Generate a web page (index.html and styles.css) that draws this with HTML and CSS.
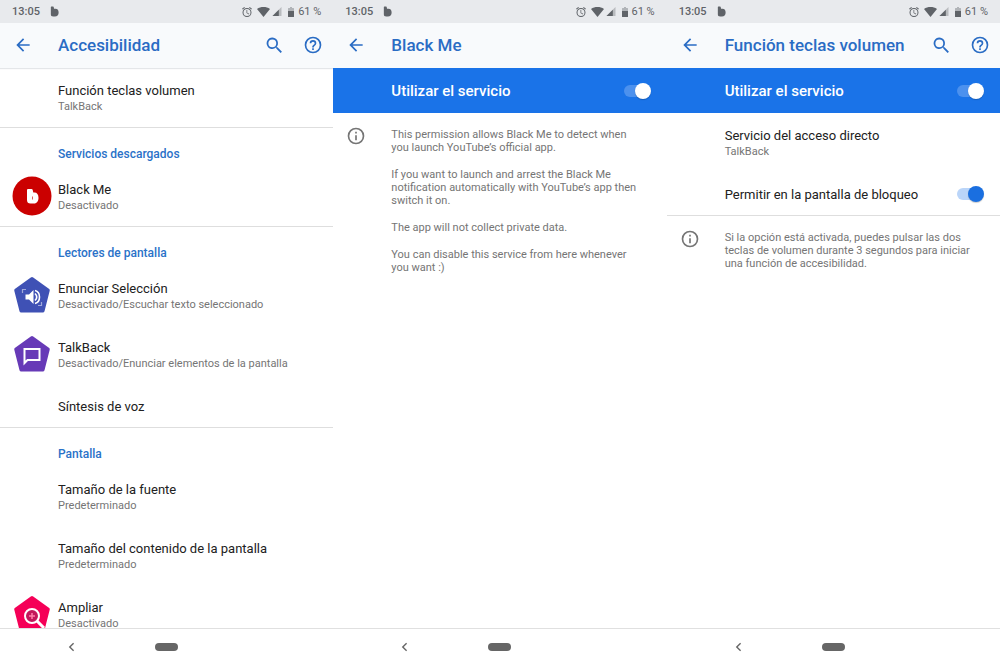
FILE: index.html
```html
<!DOCTYPE html>
<html lang="es">
<head>
  <meta charset="UTF-8">
  <meta name="viewport" content="width=device-width, initial-scale=1">
  <title>Accesibilidad</title>
  <link rel="stylesheet" href="styles.css">
</head>
<body>
  <!-- shared icons -->
  <svg class="sprite" aria-hidden="true">
    <symbol id="i-b" viewBox="0 0 24 24"><path d="M4 2q0-1 1-1h4q1 0 1.500 2l.5 3h3c5 0 7 3.500 7 8.500s-3 8.500-8 8.500H9c-3.500 0-5-2-5-5z"/></symbol>
    <symbol id="i-alarm" viewBox="0 0 24 24"><path d="M22 5.7l-4.6-3.9-1.3 1.5 4.6 3.9L22 5.7zM7.9 3.4L6.6 1.9 2 5.7l1.3 1.5 4.6-3.8zM12.500 8H11v6l4.700 2.900.8-1.200-4-2.400V8zM12 4a9 9 0 1 0 0 18 9 9 0 0 0 0-18zm0 16a7 7 0 1 1 0-14 7 7 0 0 1 0 14z"/></symbol>
    <symbol id="i-wifi" viewBox="0 0 26 20"><path d="M13 20L0 4C4 1 8 0 13 0s9 1 13 4z"/></symbol>
    <symbol id="i-signal" viewBox="0 0 20 20"><path opacity=".35" d="M0 20L20 0v20z"/><path d="M0 20L14 6v14z"/></symbol>
    <symbol id="i-battery" viewBox="0 0 12 20"><path opacity=".4" d="M4 0h4v2h3q1 0 1 1v5H0V3q0-1 1-1h3z"/><path d="M0 8h12v11q0 1-1 1H1q-1 0-1-1z"/></symbol>
    <symbol id="i-arrow" viewBox="0 0 24 24"><path d="M20 11H7.800l5.600-5.600L12 4l-8 8 8 8 1.400-1.400L7.800 13H20z"/></symbol>
    <symbol id="i-search" viewBox="0 0 24 24"><path d="M15.500 14h-.8l-.3-.3a6.500 6.500 0 1 0-.7.7l.3.3v.8l5 5 1.500-1.500-5-5zm-6 0a4.500 4.500 0 1 1 0-9 4.500 4.500 0 0 1 0 9z"/></symbol>
    <symbol id="i-help" viewBox="0 0 24 24"><path d="M11 18h2v-2h-2v2zm1-16a10 10 0 1 0 0 20 10 10 0 0 0 0-20zm0 18a8 8 0 1 1 0-16 8 8 0 0 1 0 16zm0-14a4 4 0 0 0-4 4h2a2 2 0 1 1 4 0c0 2-3 1.800-3 5h2c0-2.200 3-2.500 3-5a4 4 0 0 0-4-4z"/></symbol>
    <symbol id="i-info" viewBox="0 0 24 24"><path d="M11 7h2v2h-2zm0 4h2v6h-2zm1-9a10 10 0 1 0 0 20 10 10 0 0 0 0-20zm0 18a8 8 0 1 1 0-16 8 8 0 0 1 0 16z"/></symbol>
    <symbol id="i-back" viewBox="0 0 10 14"><path fill="none" stroke="currentColor" stroke-width="2" d="M8 1.500L2.500 7 8 12.500"/></symbol>
  </svg>

  <div class="screens">
    <section class="screen">
      <div class="status">
        <span class="time">13:05</span>
        <svg class="s-b"><use href="#i-b"/></svg>
        <svg class="s-alarm"><use href="#i-alarm"/></svg>
        <svg class="s-wifi"><use href="#i-wifi"/></svg>
        <svg class="s-signal"><use href="#i-signal"/></svg>
        <svg class="s-battery"><use href="#i-battery"/></svg>
        <span>61 %</span>
      </div>
      <header class="appbar appbar-line">
        <button class="icon-btn back" aria-label="Atrás"><svg><use href="#i-arrow"/></svg></button>
        <h1>Accesibilidad</h1>
        <button class="icon-btn" aria-label="Buscar"><svg class="search"><use href="#i-search"/></svg></button>
        <button class="icon-btn" aria-label="Ayuda"><svg><use href="#i-help"/></svg></button>
      </header>
      <main class="content">
        <div class="group">
          <div class="row">
            <div class="text"><div class="title">Función teclas volumen</div><div class="sub">TalkBack</div></div>
          </div>
        </div>
        <div class="group">
          <h2>Servicios descargados</h2>
          <div class="row">
            <svg class="app-icon" viewBox="0 0 40 40">
              <circle cx="20" cy="20" r="19.500" fill="#cb0000"/>
              <path d="M15 14q0-1 1-1h3.500q1 0 1.200 1l.6 2.500h1.200c2.500 0 4 2 4 5.200S25 27.500 22 27.500h-3.500c-2.300 0-3.500-1-3.500-3.500z" fill="#fff"/>
              <path d="M20 20.500h1v3h-1z" fill="#d96060"/>
            </svg>
            <div class="text"><div class="title">Black Me</div><div class="sub">Desactivado</div></div>
          </div>
        </div>
        <div class="group">
          <h2>Lectores de pantalla</h2>
          <div class="row">
            <svg class="app-icon" viewBox="0 0 40 40">
              <path d="M18.800 2.500q1.200-.8 2.400 0l16 11.500q.8.700.5 1.800l-5.200 20.400q-.4 1.300-1.700 1.300H9.200q-1.300 0-1.700-1.300L2.300 15.800q-.3-1.100.5-1.800z" fill="#3f51b5"/>
              <path d="M13.500 19.500H17l4.500-4.500v14L17 24.500h-3.500z" fill="#fff"/>
              <path d="M23 18.500q3.500 3.500 0 7M23 15.500c6 1.500 6 11.500 0 13" fill="none" stroke="#fff" stroke-width="1.600"/>
              <path d="M10.500 18V14.500H14M29.500 27v3.500H26" fill="none" stroke="#9fa8da" stroke-width="1.200"/>
            </svg>
            <div class="text"><div class="title">Enunciar Selección</div><div class="sub">Desactivado/Escuchar texto seleccionado</div></div>
          </div>
          <div class="row">
            <svg class="app-icon" viewBox="0 0 40 40">
              <path d="M18.800 2.500q1.200-.8 2.400 0l16 11.500q.8.700.5 1.800l-5.200 20.400q-.4 1.300-1.700 1.300H9.200q-1.300 0-1.700-1.300L2.300 15.800q-.3-1.100.5-1.800z" fill="#673ab7"/>
              <path d="M12.500 15h15v11H15.500l-3 3z" fill="none" stroke="#fff" stroke-width="2"/>
            </svg>
            <div class="text"><div class="title">TalkBack</div><div class="sub">Desactivado/Enunciar elementos de la pantalla</div></div>
          </div>
          <div class="row row-short">
            <div class="text"><div class="title">Síntesis de voz</div></div>
          </div>
        </div>
        <div class="group">
          <h2>Pantalla</h2>
          <div class="row">
            <div class="text"><div class="title">Tamaño de la fuente</div><div class="sub">Predeterminado</div></div>
          </div>
          <div class="row">
            <div class="text"><div class="title">Tamaño del contenido de la pantalla</div><div class="sub">Predeterminado</div></div>
          </div>
          <div class="row">
            <svg class="app-icon" viewBox="0 0 40 40">
              <path d="M18.800 2.500q1.200-.8 2.400 0l16 11.500q.8.700.5 1.800l-5.200 20.400q-.4 1.300-1.700 1.300H9.200q-1.300 0-1.700-1.300L2.300 15.800q-.3-1.100.5-1.800z" fill="#f50057"/>
              <circle cx="20" cy="22" r="7" fill="#c2185b" stroke="#fff" stroke-width="2"/>
              <path d="M25 27l7 7" stroke="#fff" stroke-width="3"/>
              <path d="M20 19v6M17 22h6" stroke="#ff80ab" stroke-width="1.500"/>
            </svg>
            <div class="text"><div class="title">Ampliar</div><div class="sub">Desactivado</div></div>
          </div>
        </div>
      </main>
      <nav class="navbar">
        <button class="nav-back" aria-label="Atrás"><svg><use href="#i-back"/></svg></button>
        <button class="nav-home" aria-label="Inicio"></button>
      </nav>
    </section>

    <section class="screen">
      <div class="status">
        <span class="time">13:05</span>
        <svg class="s-b"><use href="#i-b"/></svg>
        <svg class="s-alarm"><use href="#i-alarm"/></svg>
        <svg class="s-wifi"><use href="#i-wifi"/></svg>
        <svg class="s-signal"><use href="#i-signal"/></svg>
        <svg class="s-battery"><use href="#i-battery"/></svg>
        <span>61 %</span>
      </div>
      <header class="appbar">
        <button class="icon-btn back" aria-label="Atrás"><svg><use href="#i-arrow"/></svg></button>
        <h1>Black Me</h1>
      </header>
      <main class="content">
        <div class="switchbar">
          <label for="service-blackme">Utilizar el servicio</label>
          <input type="checkbox" class="switch switch-light" id="service-blackme" checked>
        </div>
        <div class="info">
          <svg><use href="#i-info"/></svg>
          <div class="info-text" lang="en">
            <p>This permission allows Black Me to detect when you launch YouTube’s official app.</p>
            <p>If you want to launch and arrest the Black Me notification automatically with YouTube’s app then switch it on.</p>
            <p>The app will not collect private data.</p>
            <p>You can disable this service from here whenever you want :)</p>
          </div>
        </div>
      </main>
      <nav class="navbar">
        <button class="nav-back" aria-label="Atrás"><svg><use href="#i-back"/></svg></button>
        <button class="nav-home" aria-label="Inicio"></button>
      </nav>
    </section>

    <section class="screen">
      <div class="status">
        <span class="time">13:05</span>
        <svg class="s-b"><use href="#i-b"/></svg>
        <svg class="s-alarm"><use href="#i-alarm"/></svg>
        <svg class="s-wifi"><use href="#i-wifi"/></svg>
        <svg class="s-signal"><use href="#i-signal"/></svg>
        <svg class="s-battery"><use href="#i-battery"/></svg>
        <span>61 %</span>
      </div>
      <header class="appbar">
        <button class="icon-btn back" aria-label="Atrás"><svg><use href="#i-arrow"/></svg></button>
        <h1>Función teclas volumen</h1>
        <button class="icon-btn" aria-label="Buscar"><svg class="search"><use href="#i-search"/></svg></button>
        <button class="icon-btn" aria-label="Ayuda"><svg><use href="#i-help"/></svg></button>
      </header>
      <main class="content">
        <div class="switchbar">
          <label for="service-volume">Utilizar el servicio</label>
          <input type="checkbox" class="switch switch-light" id="service-volume" checked>
        </div>
        <div class="group">
          <div class="row">
            <div class="text"><div class="title">Servicio del acceso directo</div><div class="sub">TalkBack</div></div>
          </div>
          <div class="row row-short">
            <label class="text title" for="lockscreen">Permitir en la pantalla de bloqueo</label>
            <input type="checkbox" class="switch" id="lockscreen" checked>
          </div>
        </div>
        <div class="info">
          <svg><use href="#i-info"/></svg>
          <div class="info-text">
            <p>Si la opción está activada, puedes pulsar las dos teclas de volumen durante 3 segundos para iniciar una función de accesibilidad.</p>
          </div>
        </div>
      </main>
      <nav class="navbar">
        <button class="nav-back" aria-label="Atrás"><svg><use href="#i-back"/></svg></button>
        <button class="nav-home" aria-label="Inicio"></button>
      </nav>
    </section>
  </div>
</body>
</html>
```
FILE: styles.css
```css
* {
  box-sizing: border-box;
}
body {
  margin: 0;
  font-family: Roboto, Arial, sans-serif;
  font-size: 13px;
  color: #212121;
  background: #fff;
}
h1, h2, p {
  margin: 0;
}
button {
  border: 0;
  padding: 0;
  background: none;
  color: inherit;
}
svg {
  display: block;
  flex: none;
  fill: currentColor;
}
.sprite {
  position: absolute;
  width: 0;
  height: 0;
}
.screens {
  display: grid;
  grid-template-columns: repeat(3, 1fr);
  height: 100vh;
}
.screen {
  display: flex;
  flex-direction: column;
  min-width: 0;
  min-height: 0;
}

/* status bar */
.status {
  display: flex;
  align-items: center;
  flex: none;
  height: 23px;
  padding: 0 12px;
  background: #e8eaed;
  color: #5f6368;
  font-size: 11px;
}
.time {
  font-weight: 500;
}
.s-b {
  width: 11px;
  height: 11px;
  margin-left: 9px;
}
.s-alarm {
  width: 12px;
  height: 12px;
  margin-left: auto;
}
.s-wifi {
  width: 13px;
  height: 10px;
  margin-left: 4px;
}
.s-signal {
  width: 10px;
  height: 9px;
  margin-left: 2px;
}
.s-battery {
  width: 6px;
  height: 10px;
  margin: 0 4px 0 6px;
}

/* app bar */
.appbar {
  display: flex;
  align-items: center;
  flex: none;
  height: 45px;
  padding: 0 10px 1px 13px;
  background: #f8fafc;
  color: #2a6cc4;
}
.appbar-line {
  box-shadow: 0 1px 1px #e4e6e9;
}
.appbar h1 {
  flex: 1;
  font-size: 17px;
  font-weight: 500;
  line-height: 20px;
}
.icon-btn {
  margin-left: 18px;
}
.icon-btn.back {
  margin: 0 25px 0 0;
}
.icon-btn svg {
  width: 20px;
  height: 20px;
}
.icon-btn .search {
  width: 21px;
  height: 21px;
}

/* lists */
.content {
  flex: 1;
  min-height: 0;
  overflow: hidden;
}
.group {
  border-bottom: 1px solid #dedede;
}
.group h2 {
  padding: 17px 16px 4px 58px;
  font-size: 12px;
  font-weight: 500;
  line-height: 18px;
  color: #2a72c8;
}
.row {
  display: flex;
  align-items: center;
  height: 59px;
  padding: 0 16px 0 12px;
}
.row-short {
  height: 43px;
}
.app-icon {
  width: 40px;
  height: 40px;
  margin: 0 6px 1px 0;
}
.text {
  flex: 1;
  padding-top: 2px;
}
.text:first-child {
  padding-left: 46px;
}
.title {
  font-size: 13px;
  line-height: 16px;
}
.sub {
  font-size: 11px;
  line-height: 16px;
  color: #757575;
}

/* switches */
.switchbar {
  display: flex;
  align-items: center;
  justify-content: space-between;
  height: 45px;
  padding: 0 16px 0 58px;
  background: #1a73e8;
  color: #fff;
  font-size: 15px;
  font-weight: 500;
}
.switch {
  appearance: none;
  position: relative;
  width: 27px;
  height: 16px;
  margin: 0;
  color: #1a6fe0;
}
.switch::before {
  content: "";
  position: absolute;
  left: 0;
  top: 2px;
  width: 24px;
  height: 12px;
  border-radius: 6px;
  background: #bad5f9;
}
.switch::after {
  content: "";
  position: absolute;
  right: 0;
  top: 0;
  width: 16px;
  height: 16px;
  border-radius: 50%;
  background: currentColor;
  box-shadow: 0 1px 1px rgba(0, 0, 0, 0.2);
}
.switch:not(:checked)::after {
  right: 11px;
}
.switch-light {
  color: #fff;
}
.switch-light::before {
  background: #4c91ee;
}

.info {
  display: flex;
  padding: 13px 24px 13px 13px;
  color: #757575;
}
.info svg {
  width: 20px;
  height: 20px;
  margin-right: 25px;
}
.info-text {
  padding-top: 2px;
  font-size: 11px;
  line-height: 13px;
}
.info-text p + p {
  margin-top: 14px;
}

/* navigation bar */
.navbar {
  display: grid;
  grid-template-columns: 1fr auto 1fr;
  align-items: center;
  flex: none;
  height: 39px;
  padding-bottom: 2px;
  border-top: 1px solid #e0e0e0;
  color: #666;
}
.nav-back {
  justify-self: start;
  padding-left: 68px;
}
.nav-back svg {
  width: 7px;
  height: 10px;
}
.nav-home {
  width: 23px;
  height: 8px;
  border-radius: 4px;
  background: #666;
}
```
